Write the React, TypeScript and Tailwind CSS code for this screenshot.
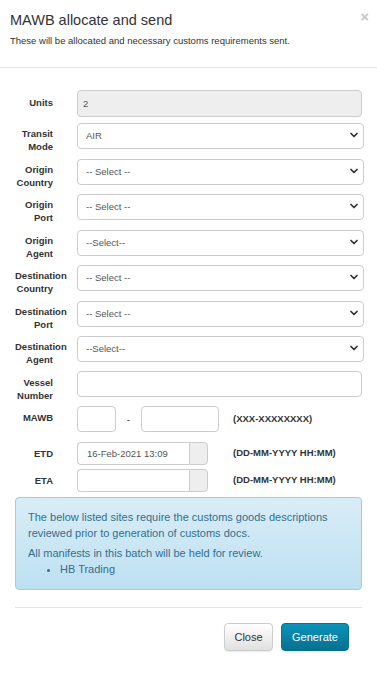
import { ChevronDown } from "lucide-react";

const SELECT_ROWS: { label: [string, string]; value: string }[] = [
  { label: ["Transit", "Mode"], value: "AIR" },
  { label: ["Origin", "Country"], value: "-- Select --" },
  { label: ["Origin", "Port"], value: "-- Select --" },
  { label: ["Origin", "Agent"], value: "--Select--" },
  { label: ["Destination", "Country"], value: "-- Select --" },
  { label: ["Destination", "Port"], value: "-- Select --" },
  { label: ["Destination", "Agent"], value: "--Select--" },
];

function Label({ lines, className = "" }: { lines: string[]; className?: string }) {
  return (
    <div
      className={`w-[38px] shrink-0 text-right text-[9.5px] font-bold leading-[13px] text-[#333] ${className}`}
    >
      {lines.map((l) => (
        <div key={l}>{l}</div>
      ))}
    </div>
  );
}

function SelectBox({ value }: { value: string }) {
  return (
    <div className="relative h-[26px] w-[287px]">
      <select
        defaultValue={value}
        className="h-full w-full appearance-none rounded-[4px] border border-[#ccc] bg-white pl-[8px] text-[9.5px] text-[#555] outline-none"
      >
        <option>{value}</option>
      </select>
      <ChevronDown
        size={12}
        strokeWidth={3.5}
        className="pointer-events-none absolute right-[4px] top-[7px] text-[#333]"
      />
    </div>
  );
}

function DateField({ value }: { value: string }) {
  return (
    <div className="flex h-[23px] w-[131px]">
      <input
        defaultValue={value}
        className="h-full w-[112px] rounded-l-[4px] border border-r-0 border-[#ccc] bg-white pl-[9px] text-[9.5px] text-[#555] outline-none"
      />
      <span className="h-full w-[19px] rounded-r-[4px] border border-[#ccc] bg-[#eee]" />
    </div>
  );
}

export default function App() {
  return (
    <div className="h-[675px] w-[377px] bg-white font-['Liberation_Sans',Arial,sans-serif] text-[#333]">
      <div className="relative h-[68px] border-b border-[#e5e5e5] px-[10px] pt-[11px]">
        <h4 className="text-[14.5px] leading-[18px] text-[#333]">MAWB allocate and send</h4>
        <p className="mt-[6px] text-[9.5px] leading-[12px]">
          These will be allocated and necessary customs requirements sent.
        </p>
        <button
          type="button"
          className="absolute right-[8px] top-[9px] text-[15px] font-bold leading-[15px] text-[#c8c8c8]"
        >
          ×
        </button>
      </div>

      <div className="px-[15px] pt-[22px]">
        <div className="flex h-[32px] items-start">
          <Label lines={["Units"]} className="pt-[6px]" />
          <input
            readOnly
            value="2"
            className="ml-[24px] h-[27px] w-[287px] rounded-[4px] border border-[#ccc] bg-[#eee] pl-[5px] text-[9.5px] text-[#555] outline-none"
          />
        </div>

        {SELECT_ROWS.map((r) => (
          <div key={r.label.join(" ")} className="flex h-[35.5px] items-start">
            <Label lines={r.label} className="pt-[5px]" />
            <div className="ml-[24px]">
              <SelectBox value={r.value} />
            </div>
          </div>
        ))}

        <div className="flex h-[35.5px] items-start">
          <Label lines={["Vessel", "Number"]} className="pt-[5px]" />
          <input className="ml-[24px] h-[26px] w-[287px] rounded-[4px] border border-[#ccc] bg-white outline-none" />
        </div>

        <div className="flex h-[36px] items-start">
          <Label lines={["MAWB"]} className="pt-[5px]" />
          <div className="ml-[24px] flex h-[26px] items-center">
            <input className="h-full w-[39px] rounded-[4px] border border-[#ccc] bg-white outline-none" />
            <span className="w-[25px] text-center text-[10px] text-[#555]">-</span>
            <input className="h-full w-[78px] rounded-[4px] border border-[#ccc] bg-white outline-none" />
            <span className="ml-[14px] text-[9.5px] font-bold">(XXX-XXXXXXXX)</span>
          </div>
        </div>

        <div className="flex h-[27px] items-start">
          <Label lines={["ETD"]} className="pt-[5px]" />
          <div className="ml-[24px] flex items-center">
            <DateField value="16-Feb-2021 13:09" />
            <span className="ml-[25px] text-[9.5px] font-bold">(DD-MM-YYYY HH:MM)</span>
          </div>
        </div>

        <div className="flex h-[28px] items-start">
          <Label lines={["ETA"]} className="pt-[5px]" />
          <div className="ml-[24px] flex items-center">
            <DateField value="" />
            <span className="ml-[25px] text-[9.5px] font-bold">(DD-MM-YYYY HH:MM)</span>
          </div>
        </div>

        <div className="h-[93px] rounded-[4px] border border-[#9acfea] bg-gradient-to-b from-[#d9edf7] to-[#bde0f1] px-[12px] pt-[11px] text-[11px] leading-[16px] text-[#31708f]">
          <p>
            The below listed sites require the customs goods descriptions reviewed prior to
            generation of customs docs.
          </p>
          <p className="mt-[4px]">All manifests in this batch will be held for review.</p>
          <ul className="list-disc pl-[32px]">
            <li>HB Trading</li>
          </ul>
        </div>
      </div>

      <div className="mx-[15px] mt-[17px] border-t border-[#e5e5e5]" />

      <div className="flex justify-end gap-[8px] pr-[28px] pt-[15px]">
        <button
          type="button"
          className="h-[28px] w-[49px] rounded-[4px] border border-[#ccc] bg-gradient-to-b from-white to-[#e0e0e0] text-[11px] text-[#333] shadow-[0_1px_1px_rgba(0,0,0,0.08)]"
        >
          Close
        </button>
        <button
          type="button"
          className="h-[28px] w-[68px] rounded-[4px] border border-[#06708e] bg-gradient-to-b from-[#0c93bb] to-[#06718f] text-[11px] text-white"
        >
          Generate
        </button>
      </div>
    </div>
  );
}
